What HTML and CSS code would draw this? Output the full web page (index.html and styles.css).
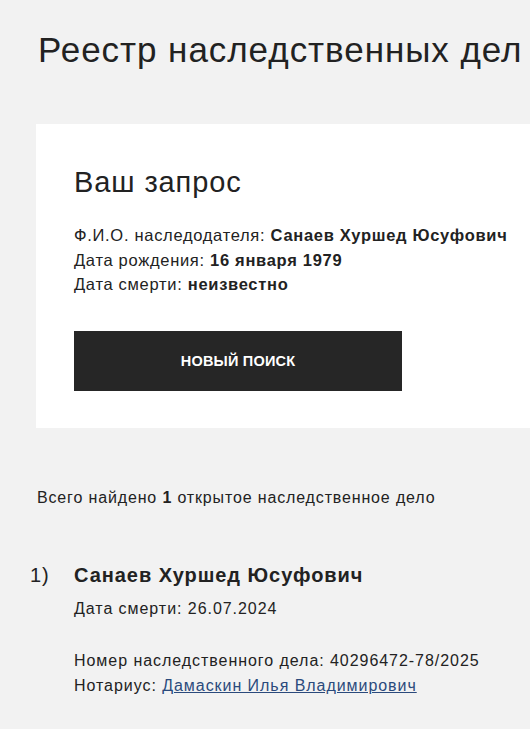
FILE: index.html
```html
<!DOCTYPE html>
<html lang="ru">
<head>
<meta charset="utf-8">
<link rel="stylesheet" href="styles.css">
</head>
<body>
<div class="page">
  <h1 class="title">Реестр наследственных дел</h1>
  <section class="card">
    <h2 class="card-title">Ваш запрос</h2>
    <div class="query">
      <div>Ф.И.О. наследодателя: <b>Санаев Хуршед Юсуфович</b></div>
      <div>Дата рождения: <b>16 января 1979</b></div>
      <div>Дата смерти: <b>неизвестно</b></div>
    </div>
    <button class="btn">НОВЫЙ ПОИСК</button>
  </section>
  <p class="total">Всего найдено <b>1</b> открытое наследственное дело</p>
  <ol class="results">
    <li class="result">
      <span class="num">1)</span>
      <div class="body">
        <div class="name">Санаев Хуршед Юсуфович</div>
        <div class="death">Дата смерти: 26.07.2024</div>
        <div class="case">Номер наследственного дела: 40296472-78/2025</div>
        <div>Нотариус: <a href="#" class="link">Дамаскин Илья Владимирович</a></div>
      </div>
    </li>
  </ol>
</div>
</body>
</html>
```
FILE: styles.css
```css
html, body {
  margin: 0;
  padding: 0;
  background: #f2f2f2;
  overflow: hidden;
}
body {
  font-family: "Liberation Sans", Arial, sans-serif;
  color: #222;
}
.page {
  width: 760px;
  padding: 28px 0 0 36px;
}
.title {
  margin: 0 0 0 2px;
  font-size: 35px;
  font-weight: 400;
  line-height: 44px;
  letter-spacing: 0.95px;
  white-space: nowrap;
}
.card {
  margin-top: 52px;
  background: #fff;
  padding: 40px 38px 37px 38px;
}
.card-title {
  margin: 0;
  font-size: 29px;
  font-weight: 400;
  line-height: 36px;
  letter-spacing: 0.9px;
}
.query {
  margin-top: 23px;
  font-size: 16.5px;
  line-height: 24.5px;
  letter-spacing: 0.7px;
}
.query b {
  font-weight: 700;
}
.btn {
  display: flex;
  align-items: center;
  justify-content: center;
  margin-top: 34px;
  width: 328px;
  height: 60px;
  border: 0;
  background: #262626;
  color: #fff;
  font-family: "Liberation Sans", Arial, sans-serif;
  font-weight: 700;
  font-size: 14.5px;
  letter-spacing: 0.2px;
}
.total {
  margin: 60px 0 0 1px;
  font-size: 16px;
  line-height: 20px;
  letter-spacing: 0.85px;
}
.results {
  list-style: none;
  margin: 53px 0 0 0;
  padding: 0;
}
.result {
  display: flex;
}
.num {
  width: 44px;
  margin-left: -6px;
  font-size: 20px;
  line-height: 28px;
  letter-spacing: 0.8px;
}
.body {
  font-size: 16px;
  line-height: 25px;
  letter-spacing: 0.95px;
}
.name {
  font-size: 20px;
  font-weight: 700;
  line-height: 28px;
  letter-spacing: 0.95px;
}
.death {
  margin-top: 7px;
}
.case {
  margin-top: 27px;
}
.link {
  color: #2b4a7c;
  text-decoration: underline;
}
```
